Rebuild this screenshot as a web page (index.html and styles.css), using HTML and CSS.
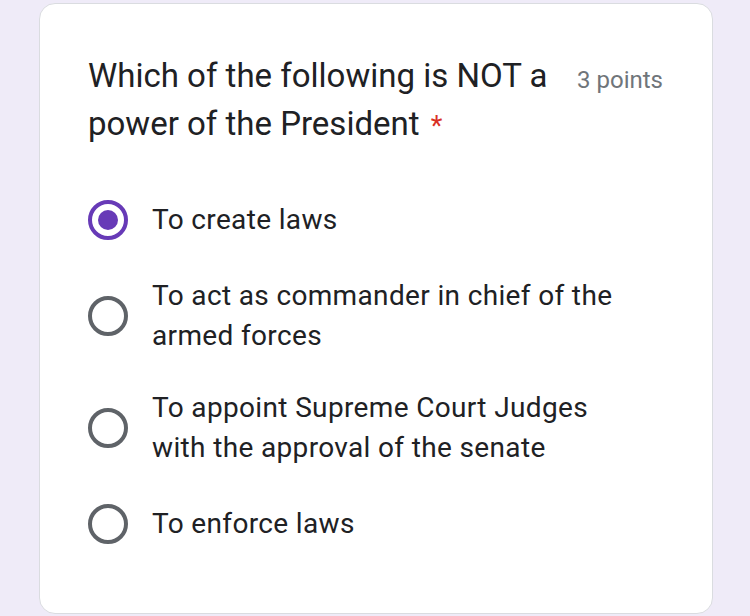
FILE: index.html
```html
<!DOCTYPE html>
<html>
<head>
<meta charset="utf-8">
<link rel="stylesheet" href="styles.css">
</head>
<body>
<div class="page">
  <div class="card">
    <div class="header">
      <div class="title">Which of the following is NOT a power of the President <span class="req">*</span></div>
      <div class="points">3 points</div>
    </div>
    <div class="options">
      <div class="option">
        <div class="radio checked"><span class="dot"></span></div>
        <div class="label">To create laws</div>
      </div>
      <div class="option">
        <div class="radio"></div>
        <div class="label">To act as commander in chief of the armed forces</div>
      </div>
      <div class="option">
        <div class="radio"></div>
        <div class="label">To appoint Supreme Court Judges with the approval of the senate</div>
      </div>
      <div class="option">
        <div class="radio"></div>
        <div class="label">To enforce laws</div>
      </div>
    </div>
  </div>
</div>
</body>
</html>
```
FILE: styles.css
```css
html, body {
  margin: 0;
  padding: 0;
  background: #efebf8;
}
.page {
  width: 750px;
  height: 616px;
  box-sizing: border-box;
  padding: 3px 37px 2px 39px;
}
.card {
  box-sizing: border-box;
  height: 611px;
  background: #fff;
  border: 1px solid #dadce0;
  border-radius: 16px;
  padding: 48px 49px 0 48px;
}
.header {
  display: flex;
  align-items: flex-start;
}
.title {
  flex: 1;
  font-family: Roboto, "Liberation Sans", sans-serif;
  font-size: 33px;
  line-height: 48px;
  color: #202124;
}
.req {
  color: #d93025;
  margin-left: 3px;
  font-size: 27px;
  line-height: 1;
}
.points {
  font-family: Roboto, "Liberation Sans", sans-serif;
  font-size: 24px;
  line-height: 48px;
  padding-top: 4px;
  color: #70757a;
  margin-left: 20px;
  white-space: nowrap;
}
.options {
  display: flex;
  flex-direction: column;
  gap: 32px;
  margin-top: 48px;
  padding-right: 40px;
}
.option {
  display: flex;
  align-items: center;
  gap: 24px;
  min-height: 48px;
}
.radio {
  flex: none;
  width: 40px;
  height: 40px;
  box-sizing: border-box;
  border: 4px solid #5f6368;
  border-radius: 50%;
  display: flex;
  align-items: center;
  justify-content: center;
}
.radio.checked {
  border-color: #673ab7;
}
.dot {
  width: 20px;
  height: 20px;
  border-radius: 50%;
  background: #673ab7;
}
.label {
  font-family: Roboto, "Liberation Sans", sans-serif;
  font-size: 28px;
  line-height: 40px;
  letter-spacing: 0.35px;
  color: #202124;
}
```
